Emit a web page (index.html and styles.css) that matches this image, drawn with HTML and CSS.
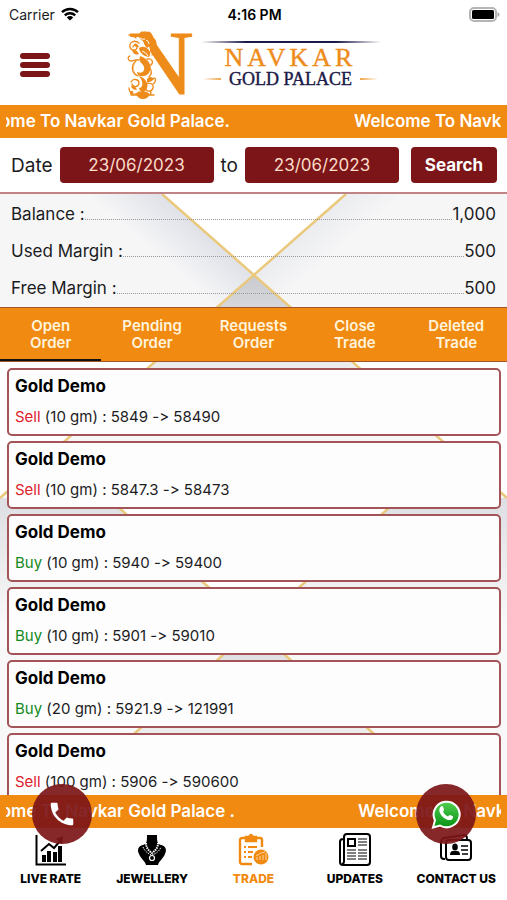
FILE: index.html
```html
<!DOCTYPE html>
<html lang="en">
<head>
<meta charset="utf-8">
<meta name="viewport" content="width=device-width, initial-scale=1">
<title>Navkar Gold Palace</title>
<link rel="stylesheet" href="styles.css">
</head>
<body>
<div class="app">
  <div class="status">
    <span class="carrier">Carrier
      <svg width="18" height="14" viewBox="0 0 18 14" fill="none" stroke="#000" stroke-width="2.4"><path d="M1 5.2a11.5 11.5 0 0 1 16 0M3.8 8.3a7.5 7.5 0 0 1 10.4 0"/><path d="M9 13.6 5.8 10.4a4.6 4.6 0 0 1 6.4 0z" fill="#000" stroke="none"/></svg>
    </span>
    <span class="clock">4:16 PM</span>
    <svg class="battery" width="31" height="15" viewBox="0 0 31 15"><rect x="1" y="1" width="26" height="13" rx="4" fill="#fff" stroke="#b5b5b5" stroke-width="2"/><rect x="3" y="3" width="22" height="9" rx="1.5"/><path d="M28.5 5q2 1 2 2.500t-2 2.500z" fill="#aaa"/></svg>
  </div>

  <header class="header">
    <button class="menu" aria-label="Menu"><i></i><i></i><i></i></button>
    <div class="logo">
      <svg class="mark" width="68" height="70" viewBox="0 0 68 70">
        <text x="1" y="64" class="mark-letter">N</text>
        <path d="M8 7h12l3 13v45H6z" fill="#fff"/>
        <g fill="none" stroke="#ee8c1b" stroke-width="1.300" stroke-linecap="round">
          <path d="M2 5h11M5 5q3 1 4 3M16 4q2-4 5 0 4-1 4 3"/>
          <path d="M12 13C7 9 2 13 3 17s6 4 7 1-4-4-4-1M3 26c-3 1-2 5 1 5s4-2 8-1"/>
          <path d="M9 31c-6 5-4 13 2 15M20 29c5-1 7 3 4 6s-5 1-4-1M23 38c2 3 2 6-1 9"/>
          <path d="M4 52c2-4 8-3 8 1s-6 5-7 1M2 58c0 6 7 8 10 4M25 49c5-3 4 3 1 5"/>
          <path d="M17 55c5-4 10-1 9 3s-7 4-7 1M4 65h7m9 0h7M24 20c4 0 4 4 1 5"/>
        </g>
        <g fill="#ee8c1b">
          <path d="M12 4q3-5 6-1 5-4 7 2l2 3q4 4 2 9l-5-2-4 3q-3-3-4-7-5-2-4-7z"/>
          <path d="M12 18q5-3 9 1t1 8q-4 0-7-3t-3-6zM5 20q4-1 7 4-5 2-7-4zM7 14q3-2 5 3-4 1-5-3z"/>
          <path d="M13 26c9 3 13 10 9 17-4 5-12 4-12-1 5 2 8-1 7-5s-6-4-4-11z"/>
          <path d="M9 32c-4 6-3 11 3 14-6-1-8-9-3-14z"/>
          <path d="M12 46c7 2 11 9 7 14-3 3-7 1-7-2 4 0 5-6 0-12zM9 64q6-6 14 0-2 5-7 5t-7-5zM20 49q4-4 7 0-3 4-7 3zM4 56q4-1 6 4-5 0-6-4z"/>
        </g>
        <path d="M19 10q3 1 3 4M15 21q4 1 6 5M13 8q2 2 5 1" fill="none" stroke="#fff"/>
      </svg>
      <div class="wordmark">
        <hr class="rule">
        <span class="name">NAVKAR</span>
        <span class="sub"><i class="dash"></i>GOLD PALACE<i class="dash flip"></i></span>
      </div>
    </div>
  </header>

  <div class="ticker"><div class="ticker-view"><span class="tail"><b>Welcome To Navkar Gold Palace.</b></span><span class="head">Welcome To Navkar Gold Palace.</span></div></div>

  <form class="filter">
    <label for="from">Date</label>
    <input id="from" type="text" value="23/06/2023" readonly>
    <label for="to">to</label>
    <input id="to" type="text" value="23/06/2023" readonly>
    <button type="button">Search</button>
  </form>

  <main class="main">
    <svg class="backdrop" viewBox="0 0 507 602" preserveAspectRatio="xMidYMin slice" aria-hidden="true">
      <defs>
        <linearGradient id="ga" gradientUnits="userSpaceOnUse" x1="208" y1="40" x2="176" y2="77"><stop stop-color="#dfe1e8"/><stop offset="1" stop-color="#f6f6f7"/></linearGradient>
        <linearGradient id="gb" gradientUnits="userSpaceOnUse" x1="300" y1="40" x2="325" y2="69"><stop stop-color="#ebecef"/><stop offset="1" stop-color="#f6f6f7"/></linearGradient>
        <linearGradient id="gc" gradientUnits="userSpaceOnUse" x1="0" y1="80" x2="0" y2="250"><stop stop-color="#c9cacf"/><stop offset=".5" stop-color="#ebebee"/><stop offset="1" stop-color="#f7f7f7"/></linearGradient>
        <linearGradient id="gd" gradientUnits="userSpaceOnUse" x1="0" y1="304" x2="0" y2="430"><stop stop-color="#dedfe3"/><stop offset="1" stop-color="#f8f8f8"/></linearGradient>
        <linearGradient id="ge" gradientUnits="userSpaceOnUse" x1="0" y1="434" x2="0" y2="602"><stop stop-color="#dcdcdf"/><stop offset="1" stop-color="#f8f8f8"/></linearGradient>
      </defs>
      <path fill="#fff" d="M0 0h507v602H0z"/>
      <path fill="url(#ga)" d="M0 0h162l92 80-40 35H0z"/>
      <path fill="url(#gb)" d="M507 0H346l-92 80 40 35h213z"/>
      <path fill="url(#gc)" d="m254 80 253 224v298H0V304z"/>
      <path fill="url(#gd)" d="M0 304h507v298H0z"/>
      <path fill="#fff" d="M254 434 60 260h388z"/>
      <path fill="url(#ge)" d="m254 434 190 168H64z"/>
      <g fill="none" stroke="#eac87c" stroke-width="2.500"><path d="M162 0 507 304M346 0 0 304M64 265l380 337M444 265 64 602"/></g>
    </svg>

    <dl class="summary">
      <div><dt>Balance :</dt><dd>1,000</dd></div>
      <div><dt>Used Margin :</dt><dd>500</dd></div>
      <div><dt>Free Margin :</dt><dd>500</dd></div>
    </dl>

    <div class="tabs" role="tablist">
      <button role="tab" aria-selected="true">Open<br>Order</button>
      <button role="tab">Pending<br>Order</button>
      <button role="tab">Requests<br>Order</button>
      <button role="tab">Close<br>Trade</button>
      <button role="tab">Deleted<br>Trade</button>
    </div>

    <div class="orders">
      <article><h2>Gold Demo</h2><p><span class="sell">Sell</span> (10 gm) : 5849 -&gt; 58490</p></article>
      <article><h2>Gold Demo</h2><p><span class="sell">Sell</span> (10 gm) : 5847.3 -&gt; 58473</p></article>
      <article><h2>Gold Demo</h2><p><span class="buy">Buy</span> (10 gm) : 5940 -&gt; 59400</p></article>
      <article><h2>Gold Demo</h2><p><span class="buy">Buy</span> (10 gm) : 5901 -&gt; 59010</p></article>
      <article><h2>Gold Demo</h2><p><span class="buy">Buy</span> (20 gm) : 5921.9 -&gt; 121991</p></article>
      <article><h2>Gold Demo</h2><p><span class="sell">Sell</span> (100 gm) : 5906 -&gt; 590600</p></article>
    </div>
  </main>

  <footer class="footer">
    <div class="ticker"><div class="ticker-view"><span class="tail low"><b>Welcome To Navkar Gold Palace .</b></span><span class="head low">Welcome To Navkar Gold Palace .</span></div></div>
    <nav class="nav">
      <a href="#live">
        <svg width="34" height="34" viewBox="0 0 34 34"><path d="M2.500 2v29.500H32" fill="none" stroke="#000" stroke-width="2"/><path d="M8 22h4v7H8zM13 18h4v11h-4zM19 19h4v10h-4zM24 13h4v16h-4z"/><path d="m7 18 8-7 5 4 7-8" fill="none" stroke="#000" stroke-width="2"/><path d="m29 3-7 3 6 5z"/></svg>
        LIVE RATE</a>
      <a href="#jewellery">
        <svg width="34" height="34" viewBox="0 0 34 34"><path d="M12 2h10c0 6 0 9 4 10 5 1 6 5 4 9-2 5-6 7-7 11H11c-1-4-5-6-7-11-2-4-1-8 4-9 4-1 4-4 4-10z"/><g fill="none" stroke="#fff"><path d="M11 10c0 5 3 8 6 10 3-2 6-5 6-10" stroke-width="2" stroke-dasharray="1.500 .8"/><path d="M8 14c2 5 6 7 9 8 3-1 7-3 9-8" stroke-dasharray="1.500 1"/><circle cx="17" cy="25" r="2.500" stroke-width="1.200"/></g></svg>
        JEWELLERY</a>
      <a href="#trade" class="active">
        <svg width="34" height="34" viewBox="0 0 34 34" fill="none" stroke="#f18a10" stroke-width="2.400"><path d="M16 31H6a2 2 0 0 1-2-2V7a2 2 0 0 1 2-2h4M20 5h4a2 2 0 0 1 2 2v7"/><path d="M10 8V4h3q2-4 4 0h3v4z" fill="#f18a10"/><path d="M8 14h2m2 0h9M8 19h2m2 0h5M8 24h2m2 0h4" stroke-width="2"/><circle cx="25" cy="24" r="7.500" fill="#f18a10" stroke="none"/><path d="M21 27v-3m3 3v-4m3 4v-5m3 5v-7M20 23l5-3 4-1" stroke="#fbd3a0" stroke-width="1"/></svg>
        TRADE</a>
      <a href="#updates">
        <svg width="34" height="34" viewBox="0 0 34 34" fill="none" stroke="#000" stroke-width="2"><path d="M7 6H5a3 3 0 0 0-3 3v20a3 3 0 0 0 3 3h24a3 3 0 0 0 3-3V4a3 3 0 0 0-3-3H9a3 3 0 0 0-3 3v24q0 3-2 3"/><rect x="10" y="6" width="7" height="7"/><g stroke-width="1.200"><path d="M20 6h9m-9 3h9m-9 3h9M9 17h9m2 0h9M9 20h9m2 0h9M9 23h9m2 0h9M9 26h9m2 0h9"/></g></svg>
        UPDATES</a>
      <a href="#contact">
        <svg width="34" height="34" viewBox="0 0 34 34" fill="none" stroke="#000" stroke-width="2"><path d="M6 26H5q-3 0-3-3V9q0-3 3-4l20-3q3 0 3 4"/><rect x="7" y="7" width="25" height="20" rx="3"/><g fill="#000" stroke="none"><ellipse cx="16" cy="14" rx="2.800" ry="3.500"/><path d="M11 22q0-4 3-4h4q3 0 3 4z"/></g><path d="M22 13h7m-7 4h7m-6 4h6" stroke-width="1.700"/></svg>
        CONTACT US</a>
    </nav>
    <a class="fab call" href="tel:0" aria-label="Call"><svg width="30" height="30" viewBox="0 0 24 24" fill="#fff"><path d="M6.600 10.800c1.400 2.800 3.800 5.100 6.600 6.600l2.200-2.200c.3-.3.700-.4 1-.2 1.100.4 2.300.6 3.600.6.600 0 1 .4 1 1V20c0 .6-.4 1-1 1C10.600 21 3 13.400 3 4c0-.6.400-1 1-1h3.500c.6 0 1 .4 1 1 0 1.300.2 2.500.6 3.600.1.300 0 .7-.2 1z"/></svg></a>
    <a class="fab chat" href="#chat" aria-label="WhatsApp"><svg width="30" height="30" viewBox="0 0 30 30"><defs><linearGradient id="wa" x1="0" y1="0" x2="0" y2="1"><stop stop-color="#52cf4f"/><stop offset="1" stop-color="#079214"/></linearGradient></defs><path d="M2 28.500 4 21.200A13 12.800 0 1 1 9 26.500z" fill="url(#wa)" stroke="#fff" stroke-width="2"/><path d="M10 7.500c.8-.6 1.700-.5 2 .3l1.100 2.600c.2.700-.8 1.700-1.200 2.200 1 2.300 2.700 3.900 5.100 4.900.6-.6 1.300-1.800 2-1.600l2.900 1.400c.7.500-.1 2.500-1 3.100-1.700 1.200-4.200.9-7-.9-2.500-1.600-4.300-3.900-5.200-6-.9-2.500-.2-4.800 1.300-6z" fill="#fff"/></svg></a>
  </footer>
</div>
</body>
</html>
```
FILE: styles.css
```css
* { box-sizing: border-box; }

body {
  margin: 0;
  background: #fff;
  color: #1c1c1e;
  font-family: Inter, "Liberation Sans", sans-serif;
  font-variant-ligatures: none;
}

button, input { font: inherit; border: 0; margin: 0; }
a { color: inherit; text-decoration: none; }

.app {
  height: 100vh;
  display: flex;
  flex-direction: column;
  overflow: hidden;
}

/* Status bar */
.status {
  display: grid;
  grid-template-columns: 1fr auto 1fr;
  align-items: center;
  height: 28px;
  flex: none;
  padding: 0 7px 0 9px;
  font-size: 14px;
}
.carrier { display: flex; align-items: center; gap: 6px; }
.clock { font-weight: 600; color: #000; }
.battery { justify-self: end; }

/* Header */
.header {
  flex: none;
  display: grid;
  grid-template-columns: 1fr auto 1fr;
  align-items: center;
  height: 77px;
  padding: 0 20px 4px;
}
.menu {
  display: flex;
  flex-direction: column;
  gap: 3px;
  width: 30px;
  padding: 0;
  background: none;
}
.menu i { height: 6px; border-radius: 3px; background: #7c1518; }
.logo { display: flex; align-items: center; gap: 6px; }
.mark { overflow: visible; }
.mark-letter {
  font: 91px "Liberation Serif", serif;
  fill: #ee8c1b;
  stroke: #ee8c1b;
  stroke-width: 1px;
}
.wordmark {
  display: flex;
  flex-direction: column;
  align-items: center;
  width: 180px;
  font-family: "Liberation Serif", serif;
}
.rule {
  width: 100%;
  height: 2px;
  margin: 0 0 2px;
  border: 0;
  background: linear-gradient(90deg, #fff, #1b1a47 25%, #1b1a47 75%, #fff);
}
.name {
  font-size: 26px;
  line-height: 25px;
  letter-spacing: 4px;
  color: #ee8c1b;
  -webkit-text-stroke: 0.4px #ee8c1b;
}
.sub {
  display: flex;
  align-items: center;
  gap: 8px;
  font-size: 18px;
  line-height: 18px;
  white-space: nowrap;
  color: #1b1a47;
  -webkit-text-stroke: 0.4px #1b1a47;
}
.dash { width: 18px; height: 2px; background: linear-gradient(90deg, #fff, #f0a54a); }
.flip { transform: scaleX(-1); }

/* Scrolling message */
.ticker {
  flex: none;
  padding: 0 6px;
  background: #f18a10;
  color: #fff;
  font-size: 17px;
  font-weight: 600;
  line-height: 33px;
}
.ticker-view { display: flex; justify-content: space-between; white-space: nowrap; }
.tail { display: flex; justify-content: flex-end; width: 224px; overflow: hidden; }
.tail b { font-weight: inherit; }
.head { width: 147px; overflow: hidden; }
.tail.low { width: 229px; }
.head.low { width: 143px; }

/* Date filter */
.filter {
  flex: none;
  display: flex;
  align-items: center;
  gap: 7px;
  height: 56px;
  padding: 0 10px 0 11px;
  border-bottom: 2px solid #c08486;
  font-size: 19px;
}
.filter input {
  flex: 1;
  min-width: 0;
  height: 36px;
  border-radius: 4px;
  background: #7c1518;
  color: #fbdcc8;
  font-size: 17px;
  text-align: center;
}
.filter button {
  width: 86px;
  height: 36px;
  margin-left: 5px;
  padding: 0;
  border-radius: 4px;
  background: #7c1518;
  color: #fff;
  font-size: 17px;
  font-weight: 700;
}

/* Content */
.main {
  position: relative;
  flex: 1;
  min-height: 0;
  display: flex;
  flex-direction: column;
  overflow: hidden;
}
.backdrop { position: absolute; inset: 0; width: 100%; height: 100%; z-index: -1; }

.summary { flex: none; margin: 0; padding: 1px 11px; font-size: 17px; }
.summary div { display: flex; align-items: center; height: 37px; }
.summary div::before {
  content: "";
  order: 1;
  flex: 1;
  height: 12px;
  border-bottom: 1px dotted #999;
}
.summary dd { order: 2; margin: 0; }

.tabs {
  flex: none;
  display: grid;
  grid-template-columns: repeat(5, 1fr);
  height: 55px;
  border: solid #a2552a;
  border-width: 1px 0;
  background: #f18a10;
}
.tabs button {
  padding: 0;
  border-bottom: 2px solid transparent;
  background: none;
  color: #fff3dc;
  font-size: 15px;
  font-weight: 600;
  line-height: 17px;
}
.tabs [aria-selected] { border-color: #111; }

.orders { display: flex; flex-direction: column; gap: 5px; padding: 6px 6px 0 7px; }
.orders article {
  flex: none;
  height: 68px;
  padding: 5px 6px;
  border: 2px solid #a35458;
  border-radius: 5px;
  background: #fdfdfd;
}
.orders h2 { margin: 0 0 9px; color: #000; font-size: 17px; font-weight: 700; line-height: 22px; }
.orders p { margin: 0; font-size: 15px; line-height: 22px; }
.sell { color: #e0202c; }
.buy { color: #128a1c; }

/* Bottom bar */
.footer { position: relative; flex: none; }
.nav {
  display: grid;
  grid-template-columns: repeat(5, 1fr);
  height: 72px;
  padding-top: 5px;
  background: #fff;
}
.nav a {
  display: flex;
  flex-direction: column;
  align-items: center;
  gap: 4px;
  color: #000;
  font-size: 12px;
  font-weight: 800;
  line-height: 16px;
  white-space: nowrap;
}
.nav .active { color: #f18a10; }
.fab {
  position: absolute;
  top: -11px;
  display: flex;
  align-items: center;
  justify-content: center;
  width: 60px;
  height: 60px;
  border-radius: 50%;
  background: rgba(124, 21, 24, 0.92);
}
.call { left: 32px; }
.chat { right: 31px; }
```
